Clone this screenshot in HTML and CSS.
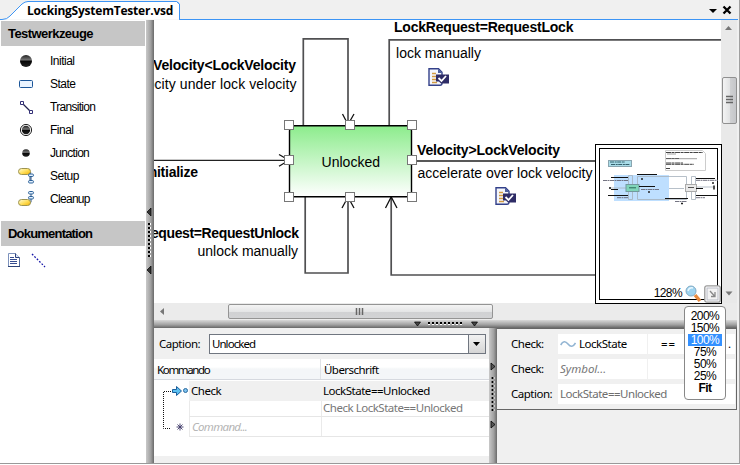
FILE: index.html
```html
<!DOCTYPE html>
<html lang="de">
<head>
<meta charset="utf-8">
<title>LockingSystemTester.vsd</title>
<link rel="stylesheet" href="styles.css">
</head>
<body>
<svg width="0" height="0" class="defs">
  <defs>
    <linearGradient id="stateFill" x1="0" y1="0" x2="0" y2="1"><stop offset="0" stop-color="#8cec8c"/><stop offset="1" stop-color="#fff"/></linearGradient>
    <linearGradient id="ball" x1="0" y1="0" x2="0" y2="1"><stop offset="0" stop-color="#222"/><stop offset=".42" stop-color="#777"/><stop offset=".5" stop-color="#050505"/><stop offset="1" stop-color="#222"/></linearGradient>
    <linearGradient id="gold" x1="0" y1="0" x2="1" y2="1"><stop offset="0" stop-color="#fffbd8"/><stop offset=".5" stop-color="#ffe060"/><stop offset="1" stop-color="#f5b400"/></linearGradient>
    <symbol id="note" viewBox="0 0 21 18">
      <path d="M1 .8h9.500l3.500 3.500v11q0 1.900-2 1.900H1z" fill="#f4f6fc" stroke="#33418a" stroke-width="1.400"/>
      <path d="M10 1v4h4z" fill="#4b5d9c"/>
      <path d="M4 5.500h4M4 8.500h4M4 11.500h4M4 14.500h5" stroke="#d29b42" stroke-width="1.600"/>
      <path d="M8 6.500h13v9h-8l-2-2H8z" fill="#2e2c66"/>
      <path d="M10.500 10l3 3 4.500-5" fill="none" stroke="#fff" stroke-width="1.800"/>
    </symbol>
  </defs>
</svg>
<div class="window">
  <header class="tabbar">
    <svg class="tabshape" width="738" height="20"><path d="M0 0H738V19.500H0z" fill="#f0f0f0"/><path d="M0 19.500H2Q7 19.500 10 16L22 4Q25 1.500 28 1.500H176.500L179.500 4V19.500H738" fill="#fff" stroke="#3c94f5"/><path d="M179.500 19V1H738V19z" fill="#f0f0f0"/><path d="M176.500 1.500L179.500 4V19.500H738" fill="none" stroke="#3c94f5"/><path d="M709 9h8l-4 4z"/><path d="M723.500 6.500l7 7m0-7l-7 7" stroke="#000" stroke-width="2.300"/></svg>
    <span class="tabname">LockingSystemTester.vsd</span>
  </header>
  <div class="body">
    <aside class="tools">
      <h2>Testwerkzeuge</h2>
      <ul>
        <li><svg width="18" height="18"><circle cx="9" cy="9" r="6" fill="url(#ball)"/></svg><span>Initial</span></li>
        <li><svg width="18" height="18"><rect x="2.500" y="5.500" width="13" height="7" rx="1" fill="#eaf4ff" stroke="#1c5699"/></svg><span>State</span></li>
        <li><svg width="18" height="18"><path d="M6 6l7 7" stroke="#222250" stroke-width="1.300"/><path d="M3.500 3.500h3v3h-3zM12.500 12.500h3v3h-3z" fill="#fff" stroke="#333077"/></svg><span class="wide">Transition</span></li>
        <li><svg width="18" height="18"><circle cx="9" cy="9" r="5.600" fill="#fff" stroke="#222"/><circle cx="9" cy="9" r="4.200" fill="url(#ball)"/></svg><span>Final</span></li>
        <li><svg width="18" height="18"><circle cx="9" cy="9" r="3.800" fill="url(#ball)"/></svg><span class="wide">Junction</span></li>
        <li><svg width="18" height="18"><path d="M14 5q-1 0-1 4v5M11 5h2" fill="none" stroke="#2a5080"/><rect x="1.500" y="1.500" width="12" height="6" rx="3" fill="url(#gold)" stroke="#9c9350"/><rect x="11.500" y="7" width="5" height="2.500" rx="1.200" fill="#e4f1ff" stroke="#2a6098"/><path d="M14 10v3" stroke="#2a5080"/><rect x="11.500" y="13.500" width="5" height="2.500" rx="1.200" fill="#e4f1ff" stroke="#2a6098"/></svg><span>Setup</span></li>
        <li><svg width="18" height="18"><path d="M14 3v9q0 1-2 1" fill="none" stroke="#2a5080"/><rect x="1.500" y="9.500" width="12" height="6" rx="3" fill="url(#gold)" stroke="#9c9350"/><rect x="11.500" y="1.500" width="5" height="2.500" rx="1.200" fill="#e4f1ff" stroke="#2a6098"/><rect x="11.500" y="6.500" width="5" height="2.500" rx="1.200" fill="#e4f1ff" stroke="#2a6098"/></svg><span class="wide">Cleanup</span></li>
      </ul>
      <h2 class="tight">Dokumentation</h2>
      <div class="docs">
        <svg width="12" height="14"><path d="M.5.5h7l4 4v9H.5z" fill="#fff" stroke="#7d92bd"/><path d="M7.500.5v4h4" fill="#dbe4f5" stroke="#2d417d"/><path d="M2 4.500h4M2 6.500h7M2 8.500h7M2 10.500h7" stroke="#354c90"/><path d="M0 13.500h12V5" fill="none" stroke="#2e4478"/></svg>
        <svg width="15" height="15"><path d="M1 1l13 13" stroke="#1717a8" stroke-width="1.300" stroke-dasharray="1.800 1.600"/></svg>
      </div>
    </aside>
    <div class="split vertical"><svg width="8" height="443"><path d="M5 188v8l-4-4zM5 246v8l-4-4z" fill="#333" stroke="#000" stroke-width=".7"/><path d="M3.500 203v35" stroke="#fff" stroke-width="3" stroke-dasharray="2 2"/><path d="M3 203v35" stroke="#000" stroke-width="2" stroke-dasharray="2 2"/></svg></div>
    <main>
      <div class="view">
        <svg class="diagram" width="567" height="283" viewBox="154 20 567 283">
          <g fill="none" stroke="#505052" stroke-width="1.700">
            <path d="M303.300 125V38.900H348V124"/>
            <path d="M305.200 197V273H348V198"/>
            <path d="M389.200 125V39.800H721"/>
            <path d="M391.200 197V275H596"/>
          </g>
          <path d="M154 160.400H289M412 161H596" stroke="#222" stroke-width="1.300"/>
          <path d="M342.500 114l5.500 10.500 6-10.500M342 208l6-11 6 11M385.500 208l5.700-11 5.800 11M279 154.500l10 5.800-10 6" fill="none" stroke="#111" stroke-width="1.300"/>
          <rect x="289.500" y="125.700" width="122" height="71" rx="5" fill="url(#stateFill)" stroke="#000" stroke-width="1.400"/>
          <g fill="#fff" stroke="#777">
            <rect x="284.500" y="120.500" width="9" height="9"/><rect x="345.500" y="120.500" width="9" height="9"/><rect x="407.500" y="120.500" width="9" height="9"/>
            <rect x="284.500" y="155.500" width="9" height="9"/><rect x="407.500" y="155.500" width="9" height="9"/>
            <rect x="284.500" y="192.500" width="9" height="9"/><rect x="345.500" y="192.500" width="9" height="9"/><rect x="407.500" y="192.500" width="9" height="9"/>
          </g>
          <g class="event">
            <text x="153" y="69.500" textLength="143">Velocity&lt;LockVelocity</text>
            <text x="145" y="177" textLength="53">Initialize</text>
            <text x="299" y="238" text-anchor="end" textLength="189">LockRequest=RequestUnlock</text>
            <text x="394" y="32" textLength="179.500">LockRequest=RequestLock</text>
            <text x="417" y="155" textLength="143">Velocity&gt;LockVelocity</text>
          </g>
          <g class="label">
            <text x="296.500" y="89" text-anchor="end" textLength="168">velocity under lock velocity</text>
            <text x="197.500" y="256" textLength="100.500">unlock manually</text>
            <text x="396" y="58" textLength="85">lock manually</text>
            <text x="417.500" y="178" textLength="175">accelerate over lock velocity</text>
            <text x="321.500" y="167" textLength="58.500">Unlocked</text>
          </g>
          <use href="#note" x="428" y="68" width="21" height="18"/>
          <use href="#note" x="495" y="187" width="21" height="18"/>
        </svg>
        <div class="vscroll"><svg width="16" height="283"><path d="M4 10h7L7.500 6z" fill="#777"/><rect x="1.500" y="57.500" width="14" height="46" rx="1.500" fill="url(#thumbV)" stroke="#909090"/><path d="M5 76.500h7M5 79.500h7M5 82.500h7" stroke="#666" stroke-width="1.500"/><path d="M4.500 271.500h7l-3.500 4z" fill="#777"/><defs><linearGradient id="thumbV"><stop offset="0" stop-color="#f5f5f5"/><stop offset=".5" stop-color="#e2e3e4"/><stop offset=".55" stop-color="#cfd0d2"/><stop offset="1" stop-color="#c4c5c8"/></linearGradient></defs></svg></div>
      </div>
      <div class="hscroll"><svg width="583" height="17"><defs><linearGradient id="thumbH" x2="0" y2="1"><stop offset="0" stop-color="#f5f5f5"/><stop offset=".5" stop-color="#e4e5e6"/><stop offset=".55" stop-color="#d0d1d3"/><stop offset="1" stop-color="#d2d3d5"/></linearGradient></defs><path d="M10 5v7L6 8.500z" fill="#777"/><rect x="74.500" y="1.500" width="264" height="14" rx="1.500" fill="url(#thumbH)" stroke="#949494"/><path d="M202.500 5v7M205.500 5v7M208.500 5v7" stroke="#666" stroke-width="1.500"/></svg></div>
      <div class="split horizontal"><svg width="583" height="8"><path d="M260.500 2h6l-3 4zM317.500 2h6l-3 4z" fill="#444" stroke="#000" stroke-width=".7"/><path d="M274 3.500h36" stroke="#fff" stroke-width="3" stroke-dasharray="2 2"/><path d="M274 3h36" stroke="#000" stroke-width="2" stroke-dasharray="2 2"/></svg></div>
      <div class="bottom">
        <section class="commands">
          <div class="caption"><label>Caption:</label><div class="combo"><span>Unlocked</span><i><svg width="15" height="18"><path d="M4 7h7l-3.500 4z"/></svg></i></div></div>
          <div class="thead"><span>Kommando</span><span>Überschrift</span></div>
          <div class="tbody">
            <svg class="tree" width="35" height="75"><path d="M17 10.500H9.500V47.500H17" fill="none" stroke="#111" stroke-dasharray="1 1"/><path d="M18.500 8.500h4V5.500l5 4.500-5 4.500v-3h-4z" fill="#5cc0f0" stroke="#1c5f9c"/><circle cx="31.500" cy="9.500" r="2" fill="#7cc2ee" stroke="#2d6ba0"/><path d="M22.500 46h7M26 42.500v7M23.500 43.500l5 5m0-5l-5 5" stroke="#3d3868" stroke-width=".9"/></svg>
            <div class="rows">
              <div class="row active"><span>Check</span><span>LockState==Unlocked</span></div>
              <div class="row sub"><span></span><span>Check LockState==Unlocked</span></div>
              <div class="row new"><span>Command...</span><span></span></div>
            </div>
          </div>
        </section>
        <div class="split vertical"><svg width="8" height="135"><path d="M2 35v7l4-3.500zM2 93v7l4-3.500z" fill="#555" stroke="#000" stroke-width=".8"/><path d="M4 49v35" stroke="#fff" stroke-width="3" stroke-dasharray="2 2"/><path d="M3.500 49v35" stroke="#000" stroke-width="2" stroke-dasharray="2 2"/></svg></div>
        <section class="props">
          <div class="form">
            <div class="field"><label>Check:</label><div class="in sym"><svg width="16" height="10"><path d="M.7 6Q4 0 8 5T15.500 4" fill="none" stroke="#93b5d3" stroke-width="1.600"/></svg><span>LockState</span></div><div class="in op">==</div><div class="in more">...</div></div>
            <div class="field"><label>Check:</label><div class="in sym hint">Symbol...</div><div class="in rest"></div></div>
            <div class="field"><label>Caption:</label><div class="in all">LockState==Unlocked</div></div>
          </div>
        </section>
      </div>
    </main>
  </div>
</div>

<div class="overview">
  <svg width="118" height="150" viewBox="600 149 118 150">
    <g>
      <rect x="608.500" y="160.500" width="23" height="6" fill="#a9dce8" stroke="#8aa5b0"/>
      <path d="M610 162h15M611 164.500h19" stroke="#35606c" stroke-dasharray="4 .7 2 .5"/>
      <path d="M665.500 150.500h37l3 3v17h-40z" fill="#fff" stroke="#ccc"/>
      <path d="M666 152.500h37M666 158.500h13M666 163h17M666 164.300h28M666 168.500h4" stroke="#444" stroke-width="1" stroke-dasharray="5 .5 3 .6"/>
      <path d="M667 154h9M666 158.700h31" stroke="#777" stroke-width=".7"/>
      <rect x="614" y="175" width="55" height="26" fill="#bedfff"/>
      <path d="M610 188h16M637.500 187V176.500H686.500V184M637.500 192V199.500H686.500V192M628.500 175.500h4v24h-4zM691.500 176.500h4v23h-4zM669 188.500h15M697 187h16" fill="none" stroke="#a4b0bb" stroke-width=".8"/>
      <rect x="626" y="184.500" width="13" height="7" fill="#80d5ba" stroke="#71999f"/><path d="M629 187.800h7" stroke="#286b57"/>
      <rect x="685.500" y="184.500" width="11" height="7" fill="#e9e9e9" stroke="#aaa"/><path d="M688 187.500h6" stroke="#555"/>
      <path d="M611 177.500h17M637 174.500h20M639 186.500h16M611 189.500h7M608 195.500h20M665 198.500h23M696 178.500h19M696 188.500h7M696 195.500h22" stroke="#111" stroke-width="1.100"/>
      <path d="M603 180.500h25M641 189.500h18M617 197.700h11M675 201.500h12M696 180.300h22M696 197.700h9" stroke="#656575" stroke-width=".9" stroke-dasharray="4 .5 2 .5"/>
      <path d="M641 179h2M648 192h2M610 187v2M712 183h2M681 203.500h2M714 185.500v4" stroke="#222" stroke-width="1.600"/>
    </g>
  </svg>
  <div class="zoombar"><span>128%</span><svg class="lens" width="17" height="18"><path d="M10 10l5 6" stroke="#e78a3f" stroke-width="3.500"/><circle cx="6" cy="6" r="5" fill="#9ed3ef" stroke="#82abc4"/><path d="M3 6q1-4 5-3" fill="none" stroke="#eaf8ff" stroke-width="1.500"/></svg><svg class="resize" width="17" height="18"><rect x=".8" y=".8" width="15.400" height="16.400" rx="2" fill="#fff" stroke="#999" stroke-width="1.300"/><rect x="3" y="3" width="11" height="12" fill="#f3f3f3" stroke="#b9bcc5"/><path d="M6 6l4.500 5M7 11.500h4V7" fill="none" stroke="#888" stroke-width="1.300"/></svg></div>
</div>
<ul class="levels"><li>200%</li><li>150%</li><li class="on">100%</li><li>75%</li><li>50%</li><li>25%</li><li class="fit">Fit</li></ul>
</body>
</html>
```

FILE: styles.css
```css
* { box-sizing: border-box; }
body { margin: 0; width: 740px; height: 465px; overflow: hidden; background: #fff; position: relative; color: #000; font: 11.5px/1 "Noto Sans", "Open Sans", sans-serif; letter-spacing: -.48px; }
svg { display: block; flex: none; }
.defs { position: absolute; }
ul { list-style: none; margin: 0; padding: 0; }
.window { width: 740px; height: 464px; border-right: 1px solid #a0a0a0; border-bottom: 1px solid #999; padding-right: 2px; background: #f0f0f0; }
.tabbar { height: 20px; position: relative; }
.tabshape { position: absolute; left: 0; top: 0; }
.tabname { position: absolute; left: 27px; top: 3px; font: bold 12px/15px "Open Sans", "Noto Sans", sans-serif; letter-spacing: -.22px; white-space: nowrap; }
.body { display: flex; height: 443px; }
.tools { width: 146px; background: #fff; padding: 1px 1px 0; font: 12px/23px "Liberation Sans", sans-serif; }
.tools h2 { margin: 0; height: 25px; background: #c6c6c6; font: bold 13px/26px "Liberation Sans", sans-serif; padding-left: 7px; letter-spacing: -.56px; }
.tools .tight { letter-spacing: -.8px; }
.tools ul { padding: 3px 0 11px; }
.tools li { display: flex; align-items: center; height: 23px; padding-left: 16px; }
.tools li svg { margin-right: 15px; }
.tools li span { letter-spacing: -.5px; padding-top: 2px; }
.tools li .wide { letter-spacing: -.7px; }
.docs { display: flex; gap: 11px; padding: 7px 0 0 7px; }
.split.vertical { width: 8px; background: linear-gradient(90deg, #c9c9c9, #a0a0a0 60%, #6a6a6a); flex: none; }
.split.horizontal { height: 8px; background: linear-gradient(#d8d8d8, #a0a0a0 60%, #666); }
main { width: 583px; }
.view { display: flex; height: 283px; background: #fff; }
.event, .label { font-family: "Liberation Sans", sans-serif; font-size: 14px; letter-spacing: 0; }
.event { font-weight: bold; }
.vscroll { width: 16px; background: #e9e9e9; }
.hscroll { height: 17px; background: #ebebeb; }
.bottom { display: flex; height: 135px; }
.commands { width: 335px; background: #f0f0f0; }
.caption { display: flex; align-items: center; height: 31px; padding-left: 5px; }
.caption label { width: 50px; }
.combo { display: flex; align-items: center; justify-content: space-between; width: 277px; height: 20px; border: 1px solid #707680; background: #fff; padding-left: 2px; }
.combo span { letter-spacing: -.95px; }
.combo i { height: 18px; width: 17px; border-left: 1px solid #707680; background: linear-gradient(#f2f2f2, #d5d5d5); }
.thead { display: flex; height: 21px; background: linear-gradient(#fff 40%, #f4f6f8 50%, #f4f6f8); border-bottom: 1px solid #d6d9df; line-height: 22px; }
.thead span { width: 167px; padding-left: 3px; border-right: 1px solid #dfe2e6; letter-spacing: -1.35px; }
.thead span + span { border: 0; letter-spacing: -.55px; }
.tbody { display: flex; height: 76px; background: #fff; padding-top: 1px; }
.rows { flex: 1; }
.row { display: flex; }
.row span { width: 132px; padding-left: 2px; white-space: nowrap; }
.row span + span { width: 168px; }
.active { height: 20px; background: #f0f0f0; line-height: 20px; }
.sub { height: 16px; line-height: 14px; color: #777; border-left: 1px solid #eaeaea; border-bottom: 1px solid #e6e6e6; }
.sub span { padding-left: 1px; border-right: 1px solid #eaeaea; }
.new { height: 20px; line-height: 20px; color: #b5b5b5; font-style: italic; border-left: 1px solid #eaeaea; border-bottom: 1px solid #e6e6e6; }
.new span { border-right: 1px solid #eaeaea; letter-spacing: -.7px; }
.props { width: 240px; }
.form { height: 82px; border: solid #666; border-width: 1px 1px 1px 0; padding: 5px 1px 0 14px; }
.field { display: flex; height: 20px; margin-bottom: 5px; align-items: center; }
.field label { width: 47px; flex: none; }
.in { height: 20px; background: #fff; line-height: 20px; display: flex; align-items: center; }
.sym { width: 89px; padding-left: 2px; }
.sym svg { margin-right: 3px; }
.op { margin-left: 1px; width: 40px; padding-left: 13px; letter-spacing: 1px; }
.more { flex: 1; margin-left: 1px; justify-content: flex-end; padding-right: 2px; letter-spacing: 2px; }
.hint { color: #777; font-style: italic; letter-spacing: 0; }
.rest { flex: 1; margin-left: 1px; }
.all { flex: 1; padding-left: 2px; color: #6e6e6e; }
.overview { position: absolute; left: 595px; top: 144px; width: 127px; height: 160px; border: 1px solid #000; background: #fff; padding: 3px; }
.overview::before { content: ""; position: absolute; inset: 3px; border: 1px solid #000; }
.overview > svg { position: absolute; left: 4px; top: 4px; }
.zoombar { position: absolute; right: 0; bottom: 0; display: flex; align-items: center; font: 12px/18px "Liberation Sans", sans-serif; }
.zoombar span { letter-spacing: -.6px; padding-right: 3px; margin-bottom: 1px; }
.lens { margin-right: 2px; }
.levels { position: absolute; left: 684px; top: 306px; width: 42px; height: 94px; border: 1px solid #888; border-radius: 4px; background: #fff; padding: 3px; font: 12px/12px "Liberation Sans", sans-serif; text-align: center; letter-spacing: -.55px; }
.levels li { height: 12px; }
.levels .on { background: #3390ff; color: #fff; }
.levels .fit { font-weight: bold; }
```
